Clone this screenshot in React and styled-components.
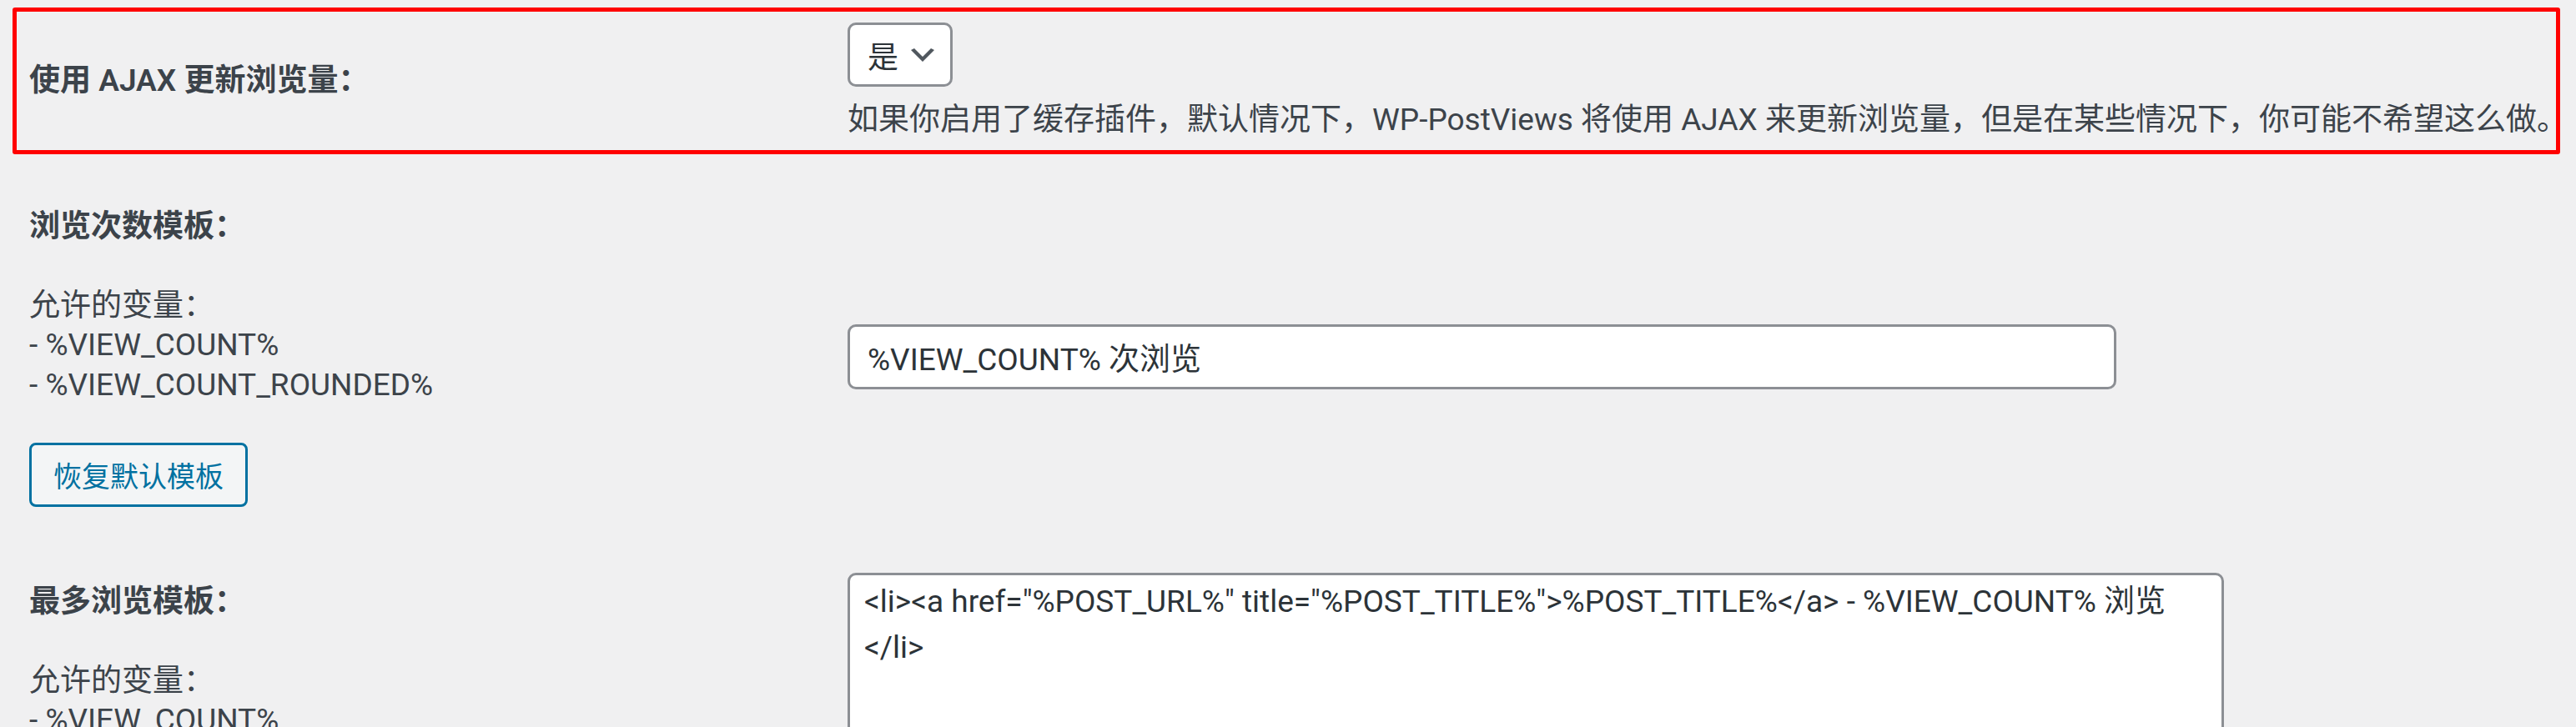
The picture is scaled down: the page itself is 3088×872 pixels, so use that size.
import React from 'react';
import styled, { createGlobalStyle } from 'styled-components';

const GlobalStyle = createGlobalStyle`
	body {
		margin: 0;
		background: #f0f0f1;
		font-family: Roboto, "Noto Sans CJK SC", sans-serif;
		color: #3c434a;
	}
`;

const FormTable = styled.div`
	padding: 9px 19px 0 15px;
	`;

const Row = styled.div`
	display: grid;
	grid-template-columns: 981px 1fr;
	align-items: ${props => (props.$highlighted ? 'center' : 'start')};
	border: 5px solid ${props => (props.$highlighted ? '#ff0000' : 'transparent')};
	border-radius: 3px;
	padding-left: 15px;
	`;

const LabelCell = styled.div`
	padding: ${props => (props.$compact ? '0' : '57.5px 0 22px')};
	font-size: 37px;
	line-height: 47.5px;
	`;

const Heading = styled.div`
	font-weight: 600;
	color: #3c434a;
	`;

const VarList = styled.div`
	margin-top: 47.5px;
	`;

const ResetButton = styled.button`
	display: flex;
	align-items: center;
	margin-top: 46px;
	height: 77px;
	padding: 0 26px;
	border: 3px solid #0071a1;
	border-radius: 8px;
	background: #f3f5f6;
	color: #0071a1;
	font-family: inherit;
	font-size: 34px;
	cursor: pointer;
	`;

const FieldCell = styled.div`
	padding: ${props => props.$pad};
	`;

const Dropdown = styled.div`
	display: inline-flex;
	align-items: center;
	box-sizing: border-box;
	height: 77px;
	padding: 0 19px 0 21px;
	border: 3px solid #8c8f94;
	border-radius: 10px;
	background: #fff;
	color: #2c3338;
	font-size: 37px;
	svg {
		margin-left: 15px;
	}
	`;

const Description = styled.p`
	margin: 15.5px 0 0;
	font-size: 37px;
	line-height: 48px;
	white-space: nowrap;
	color: #3c434a;
	`;

const TextInput = styled.input`
	display: block;
	box-sizing: border-box;
	width: 1521px;
	height: 78px;
	padding: 0 21px;
	border: 3px solid #8c8f94;
	border-radius: 10px;
	background: #fff;
	color: #2c3338;
	font-family: inherit;
	font-size: 37px;
	outline: none;
	`;

const TextArea = styled.textarea`
	display: block;
	box-sizing: border-box;
	width: 1650px;
	height: 320px;
	padding: 4px 17px;
	border: 3px solid #8c8f94;
	border-radius: 10px;
	background: #fff;
	color: #2c3338;
	font-family: inherit;
	font-size: 37px;
	line-height: 55px;
	resize: none;
	outline: none;
	`;

const Chevron = () => (
	<svg width="28" height="16" viewBox="3 6 14 8">
		<path d="M5 6l5 5 5-5 2 1-7 7-7-7 2-1z" fill="#50575e" />
	</svg>
);

const mostTemplate = '<li><a href="%POST_URL%" title="%POST_TITLE%">%POST_TITLE%</a> - %VIEW_COUNT% 浏览\n</li>';

export default function App() {
	return (
		<>
			<GlobalStyle />
			<FormTable>
				<Row $highlighted>
					<LabelCell $compact>
						<Heading>使用 AJAX 更新浏览量：</Heading>
					</LabelCell>
					<FieldCell $pad="13px 0 12.5px">
						<Dropdown>是<Chevron /></Dropdown>
						<Description>
							如果你启用了缓存插件，默认情况下，WP-PostViews 将使用 AJAX 来更新浏览量，但是在某些情况下，你可能不希望这么做。
						</Description>
					</FieldCell>
				</Row>

				<Row>
					<LabelCell>
						<Heading>浏览次数模板：</Heading>
						<VarList>
							允许的变量：<br />
							- %VIEW_COUNT%<br />
							- %VIEW_COUNT_ROUNDED%
						</VarList>
						<ResetButton>恢复默认模板</ResetButton>
					</LabelCell>
					<FieldCell $pad="199px 0 0">
						<TextInput defaultValue="%VIEW_COUNT% 次浏览" />
					</FieldCell>
				</Row>

				<Row>
					<LabelCell>
						<Heading>最多浏览模板：</Heading>
						<VarList>
							允许的变量：<br />
							- %VIEW_COUNT%<br />
							- %VIEW_COUNT_ROUNDED%<br />
							- %POST_TITLE%<br />
							- %POST_URL%
						</VarList>
						<ResetButton>恢复默认模板</ResetButton>
					</LabelCell>
					<FieldCell $pad="47px 0 0">
						<TextArea defaultValue={mostTemplate} />
					</FieldCell>
				</Row>
			</FormTable>
		</>
	);
}
